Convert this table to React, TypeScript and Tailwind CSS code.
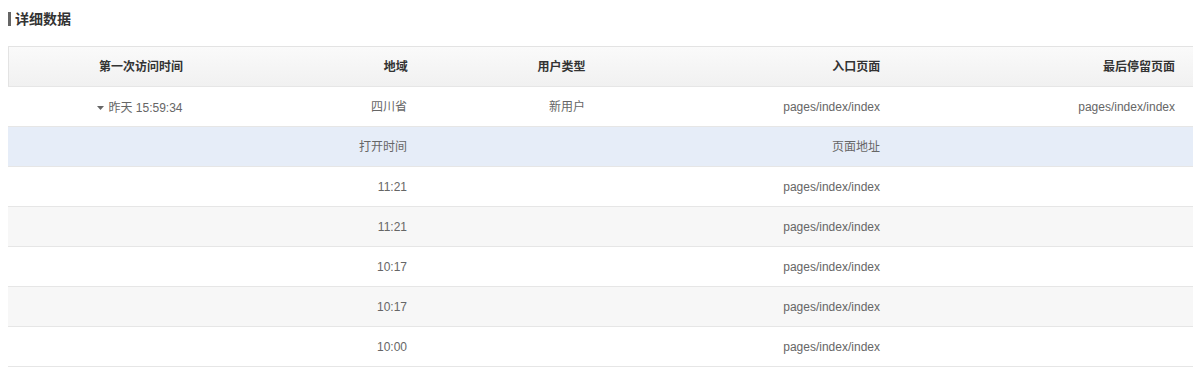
import React from "react";

const font = { fontFamily: '"Liberation Sans", "Noto Sans CJK SC", sans-serif' };

const subRows = [
  { t: "11:21", p: "pages/index/index", bg: "bg-white" },
  { t: "11:21", p: "pages/index/index", bg: "bg-[#f7f7f7]" },
  { t: "10:17", p: "pages/index/index", bg: "bg-white" },
  { t: "10:17", p: "pages/index/index", bg: "bg-[#f7f7f7]" },
  { t: "10:00", p: "pages/index/index", bg: "bg-white" },
];

function Row({
  bg,
  c1,
  c2,
  c3,
  c4,
  c5,
  head,
}: {
  bg: string;
  c1?: React.ReactNode;
  c2?: React.ReactNode;
  c3?: React.ReactNode;
  c4?: React.ReactNode;
  c5?: React.ReactNode;
  head?: boolean;
}) {
  const txt = head ? "font-bold text-[#333]" : "text-[#666]";
  return (
    <div className={`flex h-[40px] items-center border-b border-[#e6e6e6] text-[12px] ${txt} ${bg}`}>
      <div className="w-[264px] text-center">{c1}</div>
      <div className="w-[153px] pr-[18px] text-right">{c2}</div>
      <div className="w-[178px] pr-[18px] text-right">{c3}</div>
      <div className="w-[295px] pr-[18px] text-right">{c4}</div>
      <div className="w-[295px] pr-[18px] text-right">{c5}</div>
    </div>
  );
}

export default function App() {
  return (
    <div className="h-[373px] w-[1193px] overflow-hidden bg-white" style={font}>
      <div className="flex items-center pl-2 pt-[12px]">
        <div className="h-[14px] w-[3px] bg-[#666]" />
        <div className="ml-[4px] text-[14px] font-bold leading-[14px] text-[#333]">详细数据</div>
      </div>
      <div className="ml-2 mt-[20px] w-[1185px] border-t border-[#e3e3e3]">
        <Row
          head
          bg="bg-gradient-to-b from-[#fafafa] to-[#f1f1f1] border-l border-l-[#e3e3e3]"
          c1="第一次访问时间"
          c2="地域"
          c3="用户类型"
          c4="入口页面"
          c5="最后停留页面"
        />
        <Row
          bg="bg-white"
          c1={
            <span className="inline-flex items-center">
              <svg width="7" height="4" viewBox="0 0 7 4" className="mr-[4px]">
                <path d="M0 0 H7 L3.5 4 Z" fill="#666" />
              </svg>
              昨天 15:59:34
            </span>
          }
          c2="四川省"
          c3="新用户"
          c4="pages/index/index"
          c5="pages/index/index"
        />
        <Row bg="bg-[#e6edf8]" c2="打开时间" c4="页面地址" />
        {subRows.map((r, i) => (
          <Row key={i} bg={r.bg} c2={r.t} c4={r.p} />
        ))}
      </div>
    </div>
  );
}
